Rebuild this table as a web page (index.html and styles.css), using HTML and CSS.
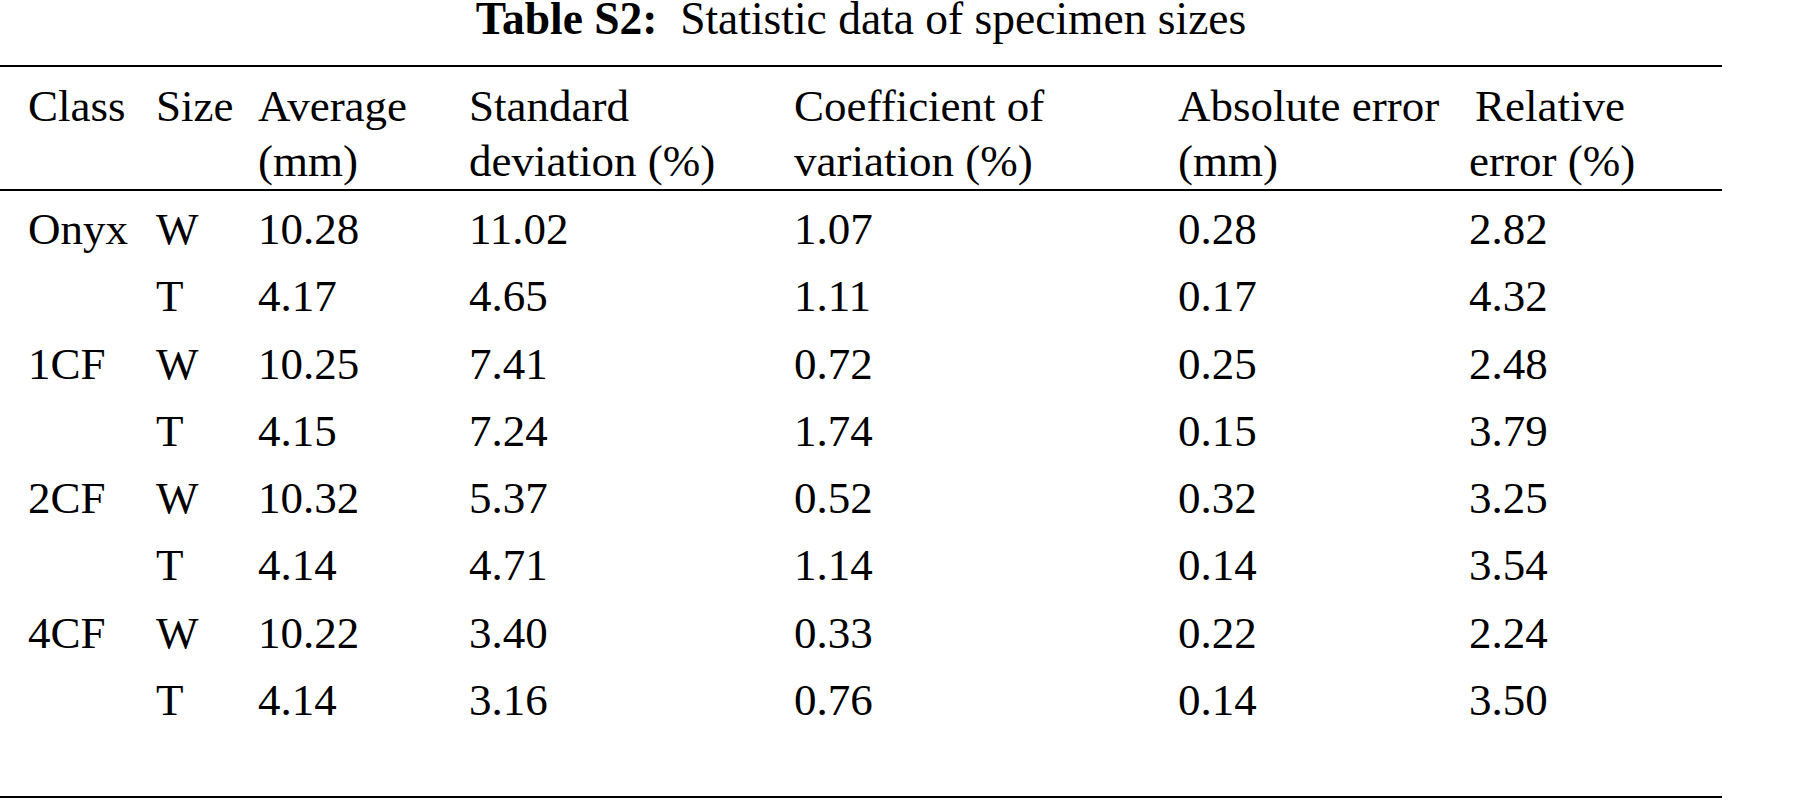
FILE: index.html
```html
<!DOCTYPE html>
<html>
<head>
<meta charset="utf-8">
<link rel="stylesheet" href="styles.css">
</head>
<body>
<div class="page">
  <div class="caption"><b class="caption-label">Table S2:</b>&ensp;Statistic data of specimen sizes</div>
  <table class="stats">
    <colgroup>
      <col class="c-class">
      <col class="c-size">
      <col class="c-avg">
      <col class="c-sd">
      <col class="c-cv">
      <col class="c-abs">
      <col class="c-rel">
    </colgroup>
    <thead>
      <tr class="head-row">
        <th class="first">Class</th>
        <th>Size</th>
        <th>Average<br>(mm)</th>
        <th>Standard<br>deviation (%)</th>
        <th>Coefficient of<br>variation (%)</th>
        <th>Absolute error<br>(mm)</th>
        <th><span class="rel-indent">Relative</span><br>error (%)</th>
      </tr>
    </thead>
    <tbody>
      <tr class="row row-top"><td class="first">Onyx</td><td>W</td><td>10.28</td><td>11.02</td><td>1.07</td><td>0.28</td><td>2.82</td></tr>
      <tr class="row"><td class="first"></td><td>T</td><td>4.17</td><td>4.65</td><td>1.11</td><td>0.17</td><td>4.32</td></tr>
      <tr class="row"><td class="first">1CF</td><td>W</td><td>10.25</td><td>7.41</td><td>0.72</td><td>0.25</td><td>2.48</td></tr>
      <tr class="row"><td class="first"></td><td>T</td><td>4.15</td><td>7.24</td><td>1.74</td><td>0.15</td><td>3.79</td></tr>
      <tr class="row"><td class="first">2CF</td><td>W</td><td>10.32</td><td>5.37</td><td>0.52</td><td>0.32</td><td>3.25</td></tr>
      <tr class="row"><td class="first"></td><td>T</td><td>4.14</td><td>4.71</td><td>1.14</td><td>0.14</td><td>3.54</td></tr>
      <tr class="row"><td class="first">4CF</td><td>W</td><td>10.22</td><td>3.40</td><td>0.33</td><td>0.22</td><td>2.24</td></tr>
      <tr class="row"><td class="first"></td><td>T</td><td>4.14</td><td>3.16</td><td>0.76</td><td>0.14</td><td>3.50</td></tr>
      <tr class="spacer-row"><td colspan="7"></td></tr>
    </tbody>
  </table>
</div>
</body>
</html>
```

FILE: styles.css
```css
html, body {
  margin: 0;
  padding: 0;
  background: #ffffff;
}

body {
  font-family: "Liberation Serif", "Times New Roman", serif;
  color: #000000;
}

.page {
  width: 1722px;
}

.caption {
  font-size: 45.5px;
  line-height: 37px;
  text-align: center;
  margin: 0 0 28px 0;
  white-space: nowrap;
}

.caption-label {
  font-weight: bold;
}

.stats {
  width: 1722px;
  table-layout: fixed;
  border-collapse: collapse;
  border-spacing: 0;
  font-size: 45px;
  border-top: 2px solid #000;
  border-bottom: 2px solid #000;
}

.c-class { width: 156px; }
.c-size { width: 102px; }
.c-avg { width: 211px; }
.c-sd { width: 325px; }
.c-cv { width: 384px; }
.c-abs { width: 291px; }
.c-rel { width: 253px; }

.stats th,
.stats td {
  padding: 0;
  text-align: left;
  vertical-align: top;
  white-space: nowrap;
  font-weight: normal;
}

.stats .first {
  padding-left: 28px;
}

.head-row {
  border-bottom: 2px solid #000;
}

.head-row th {
  line-height: 55px;
  padding-top: 12px;
  padding-bottom: 0;
}

.rel-indent {
  padding-left: 6px;
}

.row td {
  line-height: 67.3px;
  height: 67.3px;
}

.row-top td {
  padding-top: 5px;
}

.spacer-row td {
  height: 61.5px;
  padding: 0;
}
```
